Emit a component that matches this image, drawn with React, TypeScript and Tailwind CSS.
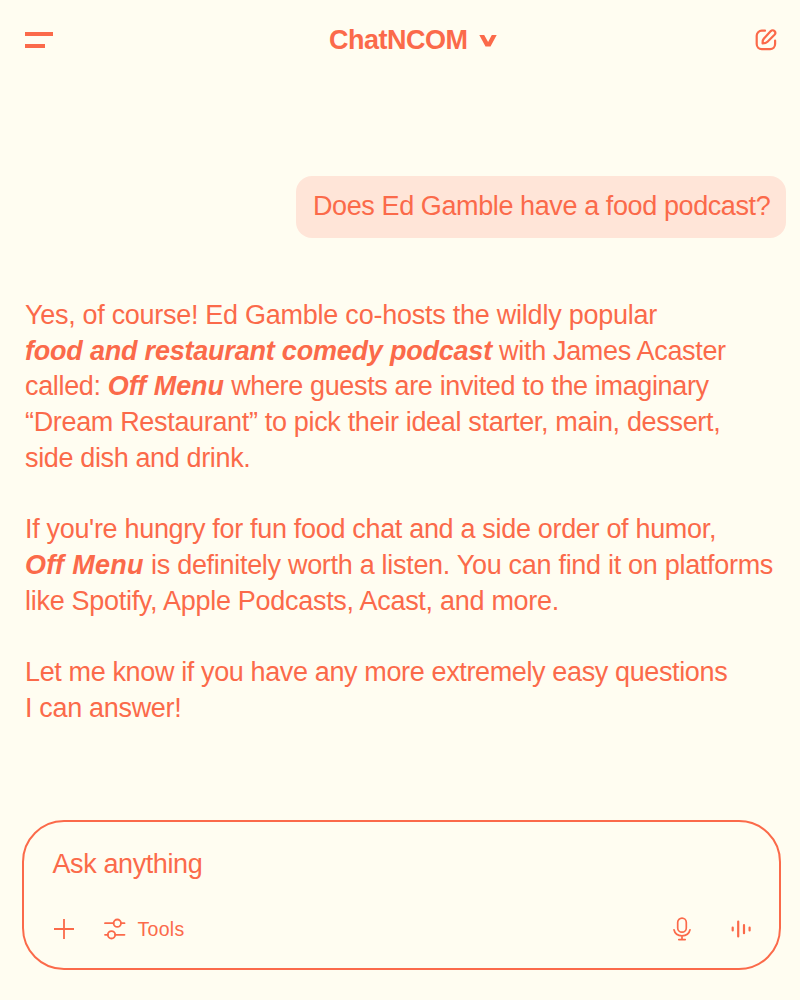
type Part = { text: string; tracking: string; strong?: boolean };

const answer: Part[][][] = [
  [
    [
      { text: "Yes, of course! Ed", tracking: "tracking-[-0.3px]" },
      {
        text: " Gamble co-hosts the wildly popular",
        tracking: "tracking-[-0.24px]",
      },
    ],
    [
      {
        text: "food and restaurant comedy podcast",
        tracking: "tracking-[-0.21px]",
        strong: true,
      },
      { text: " with James Acaster", tracking: "tracking-[-0.33px]" },
    ],
    [
      { text: "called: ", tracking: "tracking-[-0.34px]" },
      { text: "Off Menu", tracking: "tracking-[-0.04px]", strong: true },
      {
        text: " where guests are invited to the imaginary",
        tracking: "tracking-[-0.36px]",
      },
    ],
    [
      {
        text: "“Dream Restaurant” to pick their ideal starter, main, dessert,",
        tracking: "tracking-[-0.33px]",
      },
    ],
    [{ text: "side dish and drink.", tracking: "tracking-[-0.36px]" }],
  ],
  [
    [
      {
        text: "If you're hungry for fun food chat and a side order of humor,",
        tracking: "tracking-[-0.32px]",
      },
    ],
    [
      { text: "Off Menu", tracking: "tracking-[0.3px]", strong: true },
      {
        text: " is definitely worth a listen. You can find it on platforms",
        tracking: "tracking-[-0.3px]",
      },
    ],
    [
      {
        text: "like Spotify, Apple Podcasts, Acast, and more.",
        tracking: "tracking-[-0.29px]",
      },
    ],
  ],
  [
    [
      {
        text: "Let me know if you have any more extremely easy questions",
        tracking: "tracking-[-0.37px]",
      },
    ],
    [{ text: "I can answer!", tracking: "tracking-[-0.32px]" }],
  ],
];

function ComposeIcon() {
  return (
    <svg
      width="24"
      height="24"
      viewBox="0 0 24 24"
      fill="none"
      stroke="currentColor"
      strokeWidth="2.2"
      strokeLinecap="round"
      strokeLinejoin="round"
    >
      <path d="M11 2.700H7.700a5 5 0 0 0-5 5v8.400a5 5 0 0 0 5 5h8.400a5 5 0 0 0 5-5v-3.500" />
      <path d="M8.600 15.400c-.1-2.400.3-3.900 1.400-5l6.800-7.300c1-1 2.700-1 3.700 0s1 2.600 0 3.700l-7 7c-1.100 1.100-2.600 1.600-4.900 1.600Z" />
    </svg>
  );
}

function ToolsIcon() {
  return (
    <svg
      width="22"
      height="24"
      viewBox="0 0 22 24"
      fill="none"
      stroke="currentColor"
      strokeWidth="1.8"
      strokeLinecap="round"
    >
      <path d="M1 6.200h8.500M17 6.200h3.500M1 17.800h3M11 17.800h9.500" />
      <circle cx="13.300" cy="6.200" r="3.700" />
      <circle cx="7.500" cy="17.800" r="3.700" />
    </svg>
  );
}

function MicIcon() {
  return (
    <svg
      width="18"
      height="24"
      viewBox="0 0 18 24"
      fill="none"
      stroke="currentColor"
      strokeWidth="1.7"
      strokeLinecap="round"
    >
      <rect x="4.700" y="1.200" width="8.600" height="14" rx="4.300" />
      <path d="M1 12.800c.8 3.600 3.900 6 8 6s7.200-2.400 8-6M9 18.800v3.600M5.800 22.600h6.400" />
    </svg>
  );
}

function VoiceIcon() {
  return (
    <svg
      width="20"
      height="18"
      viewBox="0 0 20 18"
      fill="none"
      stroke="currentColor"
      strokeWidth="2.2"
      strokeLinecap="round"
    >
      <path d="M1.700 7.500v3M7.200 1.500v15M13 5.200v8M18.600 7.500v3" />
    </svg>
  );
}

export default function App() {
  return (
    <main className="flex h-[1000px] w-[800px] flex-col overflow-hidden bg-[#fffdf1] font-['Liberation_Sans',Arial,sans-serif] text-[27px] leading-[35.7px] text-[#fb6a4a]">
      <header className="grid h-20 grid-cols-[304px_auto_1fr] items-center pr-[22px] pl-[25px]">
        <button aria-label="Menu" className="flex w-7 flex-col gap-2">
          <span className="h-1 w-7 bg-current" />
          <span className="h-1 w-5 bg-current" />
        </button>
        <button className="flex items-center gap-[11px] pt-0.5 font-bold tracking-[-0.5px]">
          <span>ChatNCOM</span>
          <svg width="18" height="12" viewBox="0 0 18 12" fill="currentColor">
            <path d="M0.300 0h4.900l3.900 7L12.800 0h4.900l-6.200 11.500h-5Z" />
          </svg>
        </button>
        <button aria-label="New chat" className="justify-self-end">
          <ComposeIcon />
        </button>
      </header>

      <p className="mt-24 mr-3.5 flex h-[62px] w-[490px] items-center self-end rounded-2xl bg-[#ffe5d8] pl-[17px] tracking-[-0.4px] whitespace-nowrap">
        Does Ed Gamble have a food podcast?
      </p>

      <section className="mt-[60px] ml-[25px] flex flex-col gap-[35.7px] whitespace-nowrap">
        {answer.map((lines, i) => (
          <p key={i}>
            {lines.map((line, j) => (
              <span key={j} className="block">
                {line.map(({ text, tracking, strong }) =>
                  strong ? (
                    <strong key={text} className={`italic ${tracking}`}>
                      {text}
                    </strong>
                  ) : (
                    <span key={text} className={tracking}>
                      {text}
                    </span>
                  ),
                )}
              </span>
            ))}
          </p>
        ))}
      </section>

      <section className="mt-auto mr-[19px] mb-[30px] ml-[22px] flex h-[150px] flex-col rounded-[42px] border-2 border-current pt-[25px] pr-7 pl-[28.5px]">
        <p className="tracking-[-0.4px]">Ask anything</p>
        <div className="mt-[34px] flex h-6 items-center">
          <button aria-label="Add">
            <svg
              width="22"
              height="22"
              viewBox="0 0 22 22"
              stroke="currentColor"
              strokeWidth="1.8"
            >
              <path d="M11 1v20M1 11h20" />
            </svg>
          </button>
          <button className="ml-[29px] flex items-center gap-3 text-[19.5px] tracking-[0.3px]">
            <ToolsIcon />
            <span className="pt-0.5">Tools</span>
          </button>
          <button aria-label="Dictate" className="ml-auto">
            <MicIcon />
          </button>
          <button aria-label="Voice mode" className="ml-10">
            <VoiceIcon />
          </button>
        </div>
      </section>
    </main>
  );
}
